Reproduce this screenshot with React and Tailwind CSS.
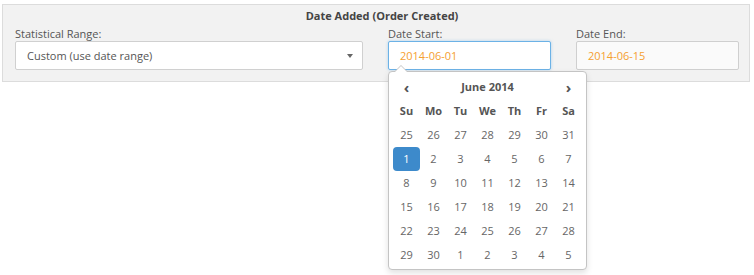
import React from 'react';

const weeks = [
    [25, 26, 27, 28, 29, 30, 31],
    [1, 2, 3, 4, 5, 6, 7],
    [8, 9, 10, 11, 12, 13, 14],
    [15, 16, 17, 18, 19, 20, 21],
    [22, 23, 24, 25, 26, 27, 28],
    [29, 30, 1, 2, 3, 4, 5],
];

const dayNames = ['Su', 'Mo', 'Tu', 'We', 'Th', 'Fr', 'Sa'];

const DatePicker = () => (
    <div className="absolute top-[30px] left-0 z-10 w-[199px] rounded-[4px] border border-[#c4c4c4] bg-white px-[4px] pt-[3px] pb-[2px] shadow-[0_3px_6px_rgba(0,0,0,0.12)]">
        {/* caret */}
        <div className="absolute -top-[7px] left-[5px] h-0 w-0 border-x-[7px] border-b-[7px] border-x-transparent border-b-[#c4c4c4]"></div>
        <div className="absolute -top-[6px] left-[6px] h-0 w-0 border-x-[6px] border-b-[6px] border-x-transparent border-b-white"></div>

        <div className="grid grid-cols-7 text-[11px] text-[#555]">
            <div className="flex h-[24px] items-center justify-center text-[15px] font-bold text-[#555]">‹</div>
            <div className="col-span-5 flex h-[24px] items-center justify-center font-bold">June 2014</div>
            <div className="flex h-[24px] items-center justify-center text-[15px] font-bold text-[#555]">›</div>

            {dayNames.map((d) => (
                <div key={d} className="flex h-[24px] items-center justify-center font-bold">
                    {d}
                </div>
            ))}

            {weeks.flat().map((n, i) =>
                i === 7 ? (
                    <div
                        key={i}
                        className="flex h-[24px] items-center justify-center rounded-[4px] bg-[#3d8acb] text-white"
                    >
                        {n}
                    </div>
                ) : (
                    <div key={i} className="flex h-[24px] items-center justify-center text-[#666]">
                        {n}
                    </div>
                )
            )}
        </div>
    </div>
);

const App = () => {
    return (
        <div
            className="h-[275px] w-[754px] bg-white pt-[4px] pl-[2px]"
            style={{ fontFamily: '"Open Sans", sans-serif' }}
        >
            <div className="h-[78px] w-[748px] border border-[#dcdcdc] bg-[#f2f2f2] pt-[3px] pl-[12px]">
                <div className="h-[16px] text-center text-[11px] leading-[16px] font-bold text-[#444]">
                    Date Added (Order Created)
                </div>

                <div className="mt-[3px] flex gap-[25px]">
                    <div className="w-[348px]">
                        <div className="h-[14px] text-[11px] leading-[14px] text-[#555]">
                            Statistical Range:
                        </div>
                        <div className="flex h-[29px] items-center justify-between rounded-[2px] border border-[#d0d0d0] bg-white pt-[2px] pr-[9px] pl-[11px] text-[11px] text-[#555]">
                            <span>Custom (use date range)</span>
                            <span className="mb-[2px] h-0 w-0 border-x-[3px] border-t-[4px] border-x-transparent border-t-[#666]"></span>
                        </div>
                    </div>

                    <div className="w-[163px]">
                        <div className="h-[14px] text-[11px] leading-[14px] text-[#555]">Date Start:</div>
                        <div className="relative">
                            <div className="flex h-[29px] items-center rounded-[2px] border border-[#6cb2e6] bg-white pt-[2px] pl-[11px] text-[11px] text-[#f5a030] shadow-[0_0_3px_rgba(102,175,233,0.5)]">
                                2014-06-01
                            </div>
                            <DatePicker />
                        </div>
                    </div>

                    <div className="w-[163px]">
                        <div className="h-[14px] text-[11px] leading-[14px] text-[#555]">Date End:</div>
                        <div className="flex h-[29px] items-center rounded-[2px] border border-[#cfcfcf] bg-[#fafafa] pt-[2px] pl-[11px] text-[11px] text-[#f5a030]">
                            2014-06-15
                        </div>
                    </div>
                </div>
            </div>
        </div>
    );
};

export default App;
